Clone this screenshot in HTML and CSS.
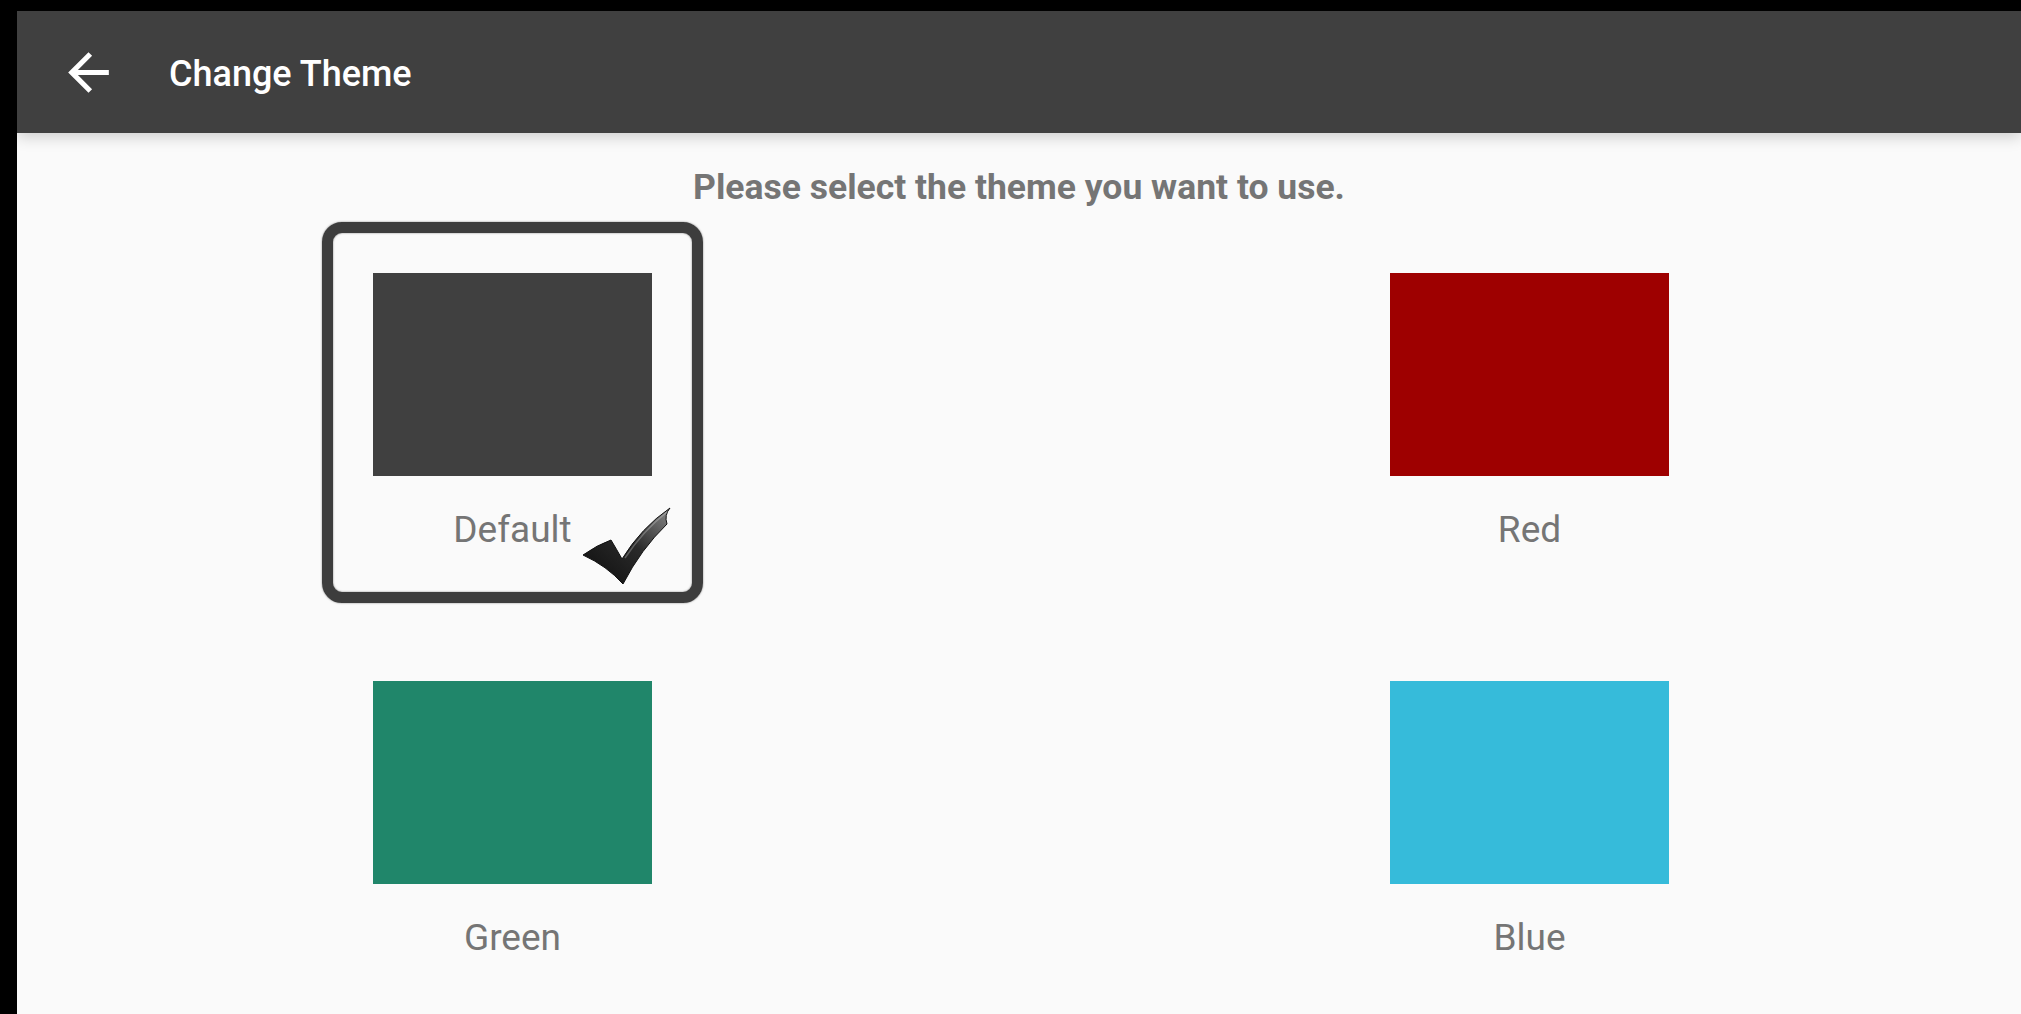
FILE: index.html
```html
<!DOCTYPE html>
<html lang="en">
<head>
    <meta charset="UTF-8">
    <meta name="viewport" content="width=device-width, initial-scale=1.0">
    <title>Change Theme</title>
    <link rel="stylesheet" href="styles.css">
</head>
<body>
    <div class="screen">
        <div class="appbar">
            <svg class="back" viewBox="0 0 24 24" width="61" height="61">
                <path fill="#fff" d="M20 11H7.83l5.59-5.59L12 4l-8 8 8 8 1.41-1.41L7.83 13H20v-2z"/>
            </svg>
            <h1 class="title">Change Theme</h1>
        </div>

        <div class="content">
            <p class="intro">Please select the theme you want to use.</p>
            <div class="themes">
                <div class="theme selected">
                    <div class="swatch swatch-default"></div>
                    <div class="label">Default</div>
                    <svg class="check" viewBox="0 0 110 100" width="110" height="100">
                        <defs>
                            <linearGradient id="checkFill" x1="0" y1="1" x2="1" y2="0">
                                <stop offset="0" stop-color="#0c0c0c"/>
                                <stop offset="0.55" stop-color="#2a2a2a"/>
                                <stop offset="1" stop-color="#8a8a8a"/>
                            </linearGradient>
                        </defs>
                        <path fill="url(#checkFill)" stroke="#111" stroke-width="1"
                              d="M14 61 Q28 51 42 46 Q48 56 53 65 Q72 34 101 14 Q95 21 98 30 Q72 55 54 90 Q38 72 14 61 Z"/>
                        <path fill="none" stroke="rgba(255,255,255,0.25)" stroke-width="1.5"
                              d="M56 64 Q74 37 98 18"/>
                    </svg>
                </div>
                <div class="theme">
                    <div class="swatch swatch-red"></div>
                    <div class="label">Red</div>
                </div>
                <div class="theme">
                    <div class="swatch swatch-green"></div>
                    <div class="label">Green</div>
                </div>
                <div class="theme">
                    <div class="swatch swatch-blue"></div>
                    <div class="label">Blue</div>
                </div>
            </div>
        </div>
    </div>
</body>
</html>
```

FILE: styles.css
```css
html, body {
    margin: 0;
    background: #000;
}
body {
    font-family: Roboto, "Noto Sans", Arial, sans-serif;
    overflow: hidden;
}
.screen {
    margin: 11px 0 0 17px;
    height: 1003px;
    background: #fafafa;
    overflow: hidden;
}
.appbar {
    height: 122px;
    background: #404040;
    display: flex;
    align-items: center;
    padding-left: 41px;
    box-shadow: 0 4px 14px rgba(0, 0, 0, 0.18);
    position: relative;
}
.back {
    display: block;
    flex: none;
}
.title {
    margin: 4px 0 0 50px;
    color: #fff;
    font-size: 36px;
    font-weight: 500;
    line-height: 42px;
}
.content {
    padding-top: 33px;
}
.intro {
    margin: 0;
    text-align: center;
    color: #757575;
    font-size: 35.5px;
    font-weight: 700;
    line-height: 42px;
}
.themes {
    display: grid;
    grid-template-columns: 381px 381px;
    column-gap: 636px;
    row-gap: 27px;
    padding-left: 305px;
    margin-top: 14px;
}
.theme {
    position: relative;
    width: 279px;
    padding: 40px 40px 41px;
    border: 11px solid transparent;
    border-radius: 20px;
}
.theme.selected {
    border-color: #3d3d3d;
    box-shadow: 0 0 2px rgba(0, 0, 0, 0.5), inset 0 0 2px rgba(0, 0, 0, 0.5);
}
.swatch {
    width: 279px;
    height: 203px;
}
.swatch-default { background: #404040; }
.swatch-red { background: #9e0000; }
.swatch-green { background: #20866a; }
.swatch-blue { background: #36bbda; }
.label {
    margin-top: 33px;
    text-align: center;
    color: #757575;
    font-size: 37px;
    line-height: 42px;
}
.check {
    position: absolute;
    left: 236px;
    top: 261px;
}
```
